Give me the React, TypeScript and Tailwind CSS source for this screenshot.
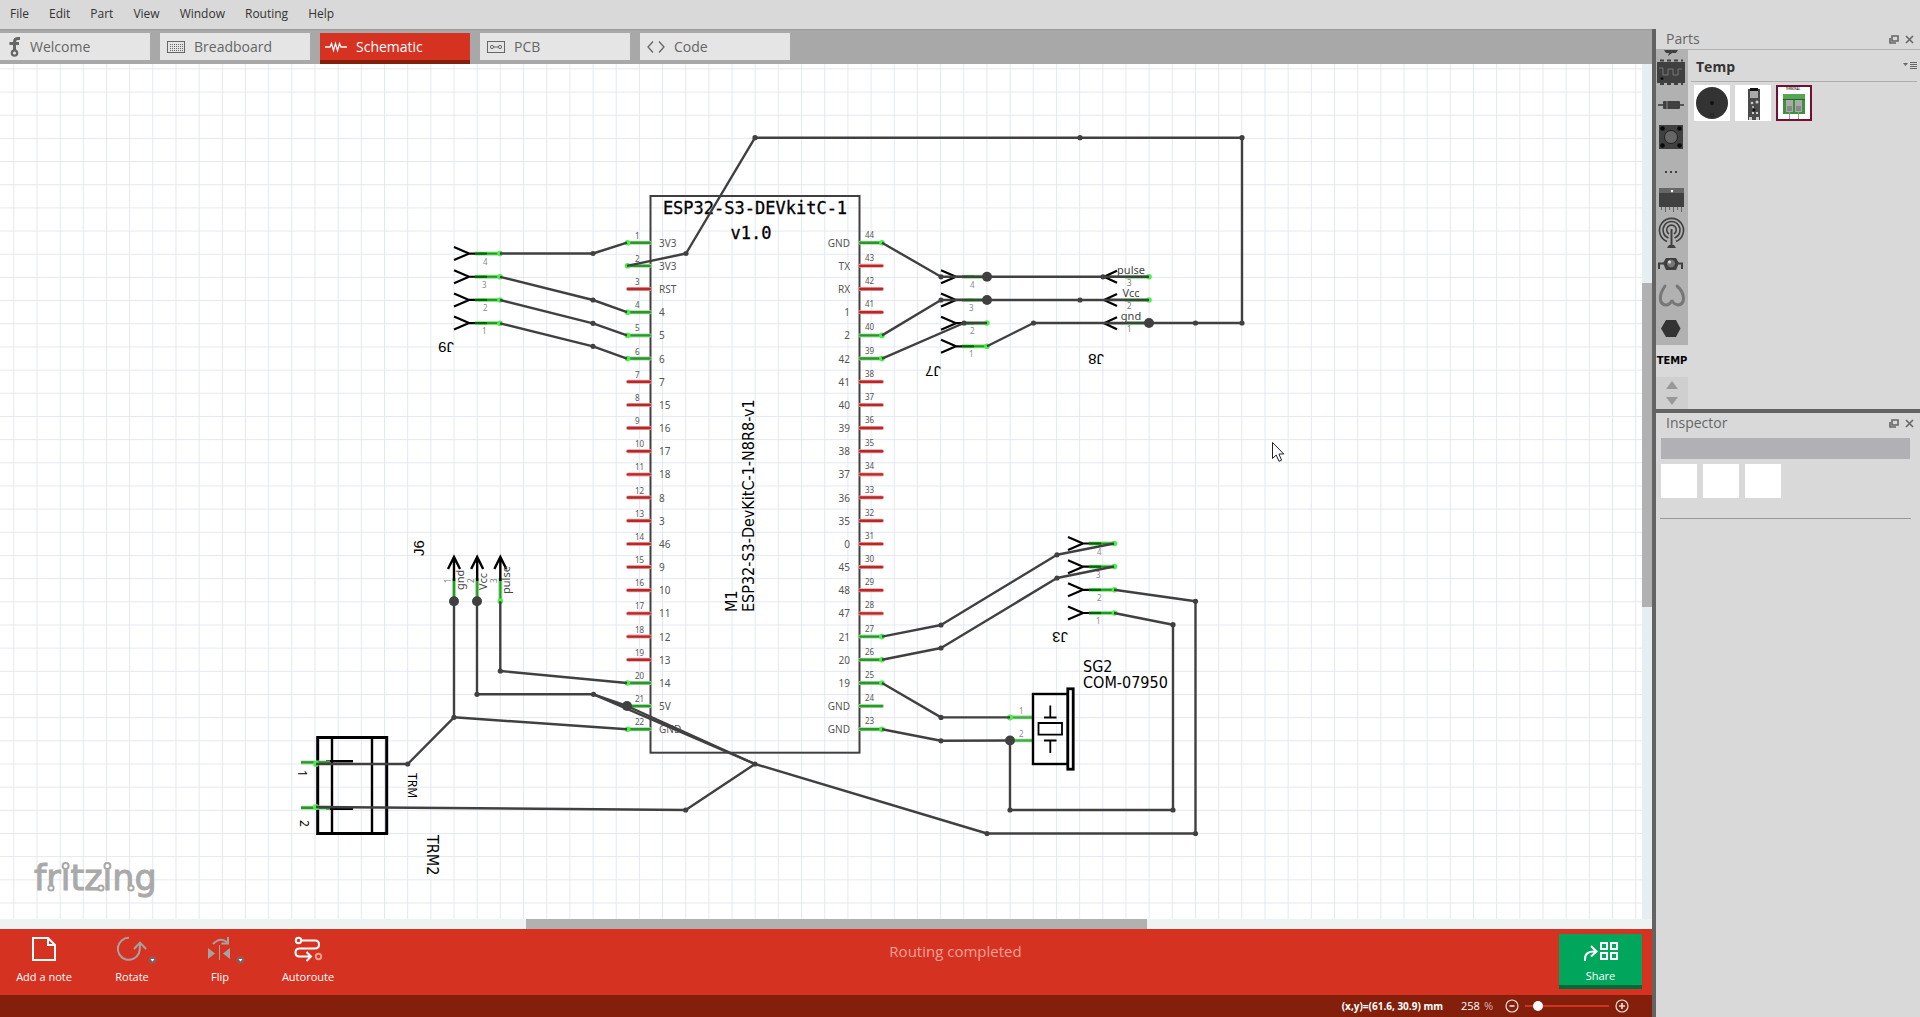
import React, { useState } from 'react';

const PITCH = 23.17;
const PIN_TOP = 242.7;

const menuItems = ['File', 'Edit', 'Part', 'View', 'Window', 'Routing', 'Help'];

const leftPins = ['3V3', '3V3', 'RST', '4', '5', '6', '7', '15', '16', '17', '18', '8', '3', '46', '9', '10', '11', '12', '13', '14', '5V', 'GND'];
const rightPins = ['GND', 'TX', 'RX', '1', '2', '42', '41', '40', '39', '38', '37', '36', '35', '0', '45', '48', '47', '21', '20', '19', 'GND', 'GND'];

const leftConnected = [1, 2, 4, 5, 6, 20, 21, 22];
const rightConnected = [44, 40, 39, 27, 26, 25, 24, 23];

const wires = [
  '500,253.5 593,253.5 627,242.7',
  '500,276.8 593,300 627,312.2',
  '500,300 593,323.3 627,335.4',
  '500,323.3 593,346.3 627,358.6',
  '627,265.8 686,253.5 755,137.7 1080,137.7 1242,137.7 1242,323 1104,323 1033.5,323 987,346.3',
  '882,242.7 941,276.8 1149,276.8',
  '882,335.4 941,300 1149,300',
  '882,358.6 964,323 987,323',
  '454,601.3 454,717.3 627,729.3',
  '454,717.3 407.7,764 316,764',
  '477,601.3 477,694.3 593.5,694.3 627,706 755,764',
  '593.5,694.3 755,764',
  '500.3,601.3 500.3,671 627,683',
  '316,807 685.7,810 755,764 987,833.5 1195.5,833.5 1195.5,601.3 1114,589.7',
  '882,636.6 941,625 1057,554.8 1114,543.5',
  '882,659.8 941,648 1057,578 1114,566.5',
  '882,683 941,717.4 1010,717.4',
  '882,729.3 941,740.8 1010,740.5',
  '1114,613 1173,624.7 1173,810 1010,810 1010,740.5',
];

const joints = [
  [593, 253.5], [593, 300], [593, 323.3], [593, 346.3], [686, 253.5], [755, 137.7], [1080, 137.7], [1242, 137.7],
  [1242, 323], [1195.5, 323], [1033.5, 323], [941, 276.8], [1103, 276.8], [941, 300], [1080, 300], [964, 323],
  [454, 717.3], [407.7, 764], [477, 694.3], [593.5, 694.3], [500.3, 671], [685.7, 810], [755, 764], [987, 833.5],
  [1195.5, 833.5], [1195.5, 601.3], [941, 625], [1057, 554.8], [941, 648], [1057, 578], [941, 717.4], [941, 740.8],
  [1173, 624.7], [1173, 810], [1010, 810],
];

const junctions = [[987, 276.8], [987, 300], [1149, 323], [454, 601.3], [477, 601.3], [627, 706], [1010, 740.5]];

const PinLine: React.FC<{ x1: number; x2: number; y: number; connected: boolean }> = ({ x1, x2, y, connected }) => (
  <g strokeLinecap="round">
    <line x1={x1} x2={x2} y1={y} y2={y} stroke={connected ? '#9adf9a' : '#f79a9a'} strokeWidth="4" />
    <line x1={x1} x2={x2} y1={y} y2={y} stroke={connected ? '#2f932f' : '#b02c2c'} strokeWidth="2.4" />
  </g>
);

// Female header: four forks pointing right
const ForkHeader: React.FC<{ x: number; y: number }> = ({ x, y }) => (
  <g>
    {[4, 3, 2, 1].map((n, i) => {
      const py = y + i * PITCH;
      return (
        <g key={n}>
          <line x1={x + 21} x2={x + 46} y1={py} y2={py} stroke="#8fe08f" strokeWidth="4" />
          <line x1={x + 21} x2={x + 46} y1={py} y2={py} stroke="#1c9c1c" strokeWidth="2" />
          <line x1={x + 21} x2={x + 33} y1={py} y2={py} stroke="#006400" strokeWidth="2.2" />
          <path d={`M${x} ${py - 6.5}L${x + 15} ${py}L${x} ${py + 6.5}M${x + 15} ${py}H${x + 21}`} fill="none" stroke="#000" strokeWidth="2.2" />
          <text x={x + (n % 2 ? 28 : 29)} y={py + 11} fontSize="8" fill="#8c8c8c">{n}</text>
        </g>
      );
    })}
  </g>
);

const Schematic: React.FC = () => (
  <svg className="block w-full h-full" fontFamily="'Noto Sans', sans-serif" role="img" aria-label="Schematic">
    <defs>
      <pattern id="grid" x="13.3" y="4.4" width={PITCH} height={PITCH} patternUnits="userSpaceOnUse">
        <path d={`M0 .5H${PITCH}M.5 0V${PITCH}`} stroke="#e3e8ef" strokeWidth="1" fill="none" />
      </pattern>
    </defs>
    <rect width="100%" height="100%" fill="#fff" />
    <rect width="100%" height="100%" fill="url(#grid)" />
    <g transform="translate(0 -64)">
      {/* Dev board */}
      <rect x="650.5" y="196" width="209" height="556.7" fill="none" stroke="#404040" strokeWidth="2" />
      <g fontFamily="'DejaVu Sans Mono', monospace" fontSize="17" stroke="#000" strokeWidth=".3" textAnchor="middle">
        <text x="755" y="214">ESP32-S3-DEVkitC-1</text>
        <text x="751" y="239">v1.0</text>
      </g>
      {leftPins.map((label, i) => {
        const y = PIN_TOP + i * PITCH;
        return (
          <g key={i}>
            <PinLine x1={628} x2={650} y={y} connected={leftConnected.includes(i + 1)} />
            <text x="635" y={y - 4} fontSize="8" fill="#555">{i + 1}</text>
            <text x="659" y={y + 4} fontSize="10" fill="#555">{label}</text>
          </g>
        );
      })}
      {rightPins.map((label, i) => {
        const y = PIN_TOP + i * PITCH;
        return (
          <g key={i}>
            <PinLine x1={860} x2={882} y={y} connected={rightConnected.includes(44 - i)} />
            <text x="865" y={y - 5} fontSize="8" fill="#555">{44 - i}</text>
            <text x="850" y={y + 4} fontSize="10" fill="#555" textAnchor="end">{label}</text>
          </g>
        );
      })}

      <ForkHeader x={454} y={253.6} />
      <ForkHeader x={941} y={276.8} />
      <ForkHeader x={1068} y={543.5} />

      {/* J8 */}
      {['pulse', 'Vcc', 'gnd'].map((label, i) => {
        const y = 276.8 + i * PITCH;
        return (
          <g key={label}>
            <line x1="1125" x2="1149" y1={y} y2={y} stroke="#8fe08f" strokeWidth="4" />
            <path d={`M1117 ${y - 6}L1104 ${y}L1117 ${y + 6}M1104 ${y}H1125`} fill="none" stroke="#000" strokeWidth="2.2" />
            <text x="1131" y={y - 3} fontSize="11" fill="#444" textAnchor="middle">{label}</text>
            <text x="1127" y={y + 9} fontSize="8" fill="#777">{3 - i}</text>
          </g>
        );
      })}

      {/* J6 */}
      {['gnd', 'Vcc', 'pulse'].map((label, i) => {
        const x = 454 + i * PITCH;
        return (
          <g key={label}>
            <line x1={x} x2={x} y1="578" y2="601" stroke="#8fe08f" strokeWidth="4" />
            <line x1={x} x2={x} y1="578" y2="601" stroke="#2f932f" strokeWidth="2" />
            <path d={`M${x - 6} 569L${x} 557L${x + 6} 569M${x} 557V581`} fill="none" stroke="#000" strokeWidth="2.4" />
            <text transform={`translate(${x + 10} ${i === 2 ? 594 : 590}) rotate(-90)`} fontSize="11" fill="#444">{label}</text>
            <text transform={`translate(${x - 3} 583) rotate(-90)`} fontSize="8" fill="#777">{i + 1}</text>
          </g>
        );
      })}

      {/* Screw terminal */}
      <g fill="none" stroke="#000">
        <rect x="317.7" y="737.5" width="69" height="96" strokeWidth="3" />
        <path d="M332 738V833M372 738V833" strokeWidth="2.4" />
        <path d="M326 761.3H353M326 808.6H353" strokeWidth="2.6" />
      </g>
      <path d="M301 762.4H330M301 807.7H330" stroke="#8fe08f" strokeWidth="4" />
      <path d="M301 762.4H330M301 807.7H330" stroke="#2f932f" strokeWidth="2.4" />
      <text transform="translate(298 770) rotate(90)" fontSize="12">1</text>
      <text transform="translate(300 820) rotate(90)" fontSize="12">2</text>
      <text transform="translate(408 773) rotate(90)" fontSize="12">TRM</text>

      {/* Piezo buzzer */}
      <path d="M1010 717.4H1033M1010 740.5H1033" stroke="#7fd67f" strokeWidth="3.6" />
      <path d="M1010 717.4H1033M1010 740.5H1033" stroke="#46a846" strokeWidth="2" />
      <rect x="1033" y="694" width="35" height="70" fill="none" stroke="#000" strokeWidth="2.4" />
      <rect x="1067.8" y="688.8" width="5.4" height="80.4" fill="#fff" stroke="#000" strokeWidth="2.8" />
      <path d="M1050.3 705.5V717.5M1044 717.5H1056.5M1044 740.5H1056.5M1050.3 740.5V753M1038.5 723H1062V734.7H1038.5Z" fill="none" stroke="#000" strokeWidth="1.8" />
      <text x="1019" y="714" fontSize="8" fill="#8c8c8c">1</text>
      <text x="1019" y="737" fontSize="8" fill="#8c8c8c">2</text>

      {/* Open pin ends */}
      <g fill="#4fee4f">
        {[242.7, 265.8, 312.2, 335.4, 358.6, 683, 729.3].map((y) => <circle key={y} cx="627.5" cy={y} r="2.8" />)}
        {[242.7, 335.4, 358.6, 636.6, 659.8, 683, 729.3].map((y) => <circle key={y} cx="882" cy={y} r="2.8" />)}
        {[253.6, 276.8, 300, 323.2].map((y) => <circle key={y} cx="500" cy={y} r="2.8" />)}
        {[543.5, 566.6, 589.8, 613].map((y) => <circle key={y} cx="1114.5" cy={y} r="2.8" />)}
        {[323, 346.3].map((y) => <circle key={y} cx="987" cy={y} r="2.8" />)}
        {[276.8, 300].map((y) => <circle key={y} cx="1149" cy={y} r="2.8" />)}
        <circle cx="500.3" cy="601.3" r="2.8" />
        <circle cx="1010" cy="717.4" r="3" />
        <circle cx="316" cy="764" r="3" />
        <circle cx="316" cy="807" r="3" />
      </g>

      {/* Wires */}
      <g fill="none" stroke="#404040" strokeWidth="2.4" strokeLinejoin="round">
        {wires.map((points) => <polyline key={points} points={points} />)}
      </g>
      <g fill="#404040">
        {joints.map(([x, y]) => <circle key={`${x}-${y}`} cx={x} cy={y} r="2.6" />)}
        {junctions.map(([x, y]) => <circle key={`${x}-${y}`} cx={x} cy={y} r="5" />)}
      </g>

      {/* Part labels */}
      <g fontFamily="'DejaVu Sans Condensed', 'Noto Sans', sans-serif" fontSize="16">
        <text transform="translate(737 612) rotate(-90)">M1</text>
        <text transform="translate(754 612) rotate(-90)">ESP32-S3-DevKitC-1-N8R8-v1</text>
        <text transform="translate(427 835) rotate(90)">TRM2</text>
        <text x="1083" y="672">SG2</text>
        <text x="1083" y="688">COM-07950</text>
      </g>
      <g fontFamily="'Liberation Sans', sans-serif" fontSize="15">
        <text transform="translate(454 342) rotate(180)">J9</text>
        <text transform="translate(941 366) rotate(180)">J7</text>
        <text transform="translate(1104 354) rotate(180)">J8</text>
        <text transform="translate(1068 632) rotate(180)">J3</text>
        <text transform="translate(424 556) rotate(-90)">J6</text>
      </g>

      {/* Watermark */}
      <text x="34" y="890" fontFamily="'DejaVu Sans', sans-serif" fontSize="35" fill="#a9a9a9" stroke="#a9a9a9" strokeWidth="1">fritzing</text>
      <g fill="#fff" stroke="#a9a9a9" strokeWidth="2">
        <circle cx="65.600" cy="866" r="3" />
        <circle cx="107.400" cy="866" r="3" />
        <circle cx="51" cy="888" r="2.600" />
        <circle cx="101" cy="888" r="2.600" />
        <circle cx="131" cy="888" r="2.600" />
      </g>

      <path d="M1272.5 442.5V458.5L1276.2 455L1279 461.3L1281.6 460.2L1278.9 454H1283.8Z" fill="#fff" stroke="#222" strokeWidth="1" />
    </g>
  </svg>
);

const WelcomeIcon = () => (
  <svg width="14" height="22" viewBox="0 0 14 22" fill="none" stroke="#666" strokeWidth="3">
    <path d="M13 2.5H11Q7.500 2.500 7.500 6V14M2.500 7.500H12" />
    <circle cx="7.500" cy="17" r="2.700" strokeWidth="2.200" />
  </svg>
);

const BreadboardIcon = () => (
  <svg width="18" height="14" viewBox="0 0 18 14" fill="none" stroke="#666">
    <rect x=".5" y="1.5" width="17" height="11" />
    <path d="M3 4.5H16M3 6.5H16M3 8.5H16M3 10.5H16" strokeDasharray="1 1" />
  </svg>
);

const SchematicIcon = () => (
  <svg width="22" height="14" viewBox="0 0 22 14" fill="none" stroke="#fff" strokeWidth="1.3">
    <path d="M0 7H5L6.5 3.5L8.5 10.5L10.5 3.5L12.5 10.5L14.5 3.5L16 7H22" />
  </svg>
);

const PcbIcon = () => (
  <svg width="18" height="14" viewBox="0 0 18 14" fill="none" stroke="#666">
    <rect x=".5" y="1.5" width="17" height="11" />
    <circle cx="5" cy="7" r="1.6" />
    <circle cx="13" cy="7" r="1.6" />
    <path d="M6.6 7H11.4" />
  </svg>
);

const CodeIcon = () => (
  <svg width="18" height="14" viewBox="0 0 18 14" fill="none" stroke="#666" strokeWidth="1.3">
    <path d="M6 1.5L1 7L6 12.5M12 1.5L17 7L12 12.5" />
  </svg>
);

const tabs = [
  { name: 'Welcome', icon: <WelcomeIcon /> },
  { name: 'Breadboard', icon: <BreadboardIcon /> },
  { name: 'Schematic', icon: <SchematicIcon /> },
  { name: 'PCB', icon: <PcbIcon /> },
  { name: 'Code', icon: <CodeIcon /> },
];

const NoteIcon = () => (
  <svg width="26" height="26" viewBox="0 0 26 26" fill="none" stroke="#fff" strokeWidth="2">
    <path d="M2 2H17L24 9V24H2ZM17 2V9H24" />
  </svg>
);

const DropBadge = () => (
  <g stroke="none">
    <circle cx="36.500" cy="24" r="4" fill="#8c5a5a" />
    <path d="M34.500 23H38.500L36.500 25.400Z" fill="#fff" />
  </g>
);

const RotateIcon = () => (
  <svg width="50" height="28" viewBox="-9 0 50 28" fill="none" stroke="#a3a3a3" strokeWidth="2">
    <path d="M13 1.8A11 11 0 1 0 23 17Q24 14 24 7M18 13L24 6.6L30 13" />
    <DropBadge />
  </svg>
);

const FlipIcon = () => (
  <svg width="50" height="28" viewBox="-9 0 50 28" fill="none">
    <path d="M9 8Q16 .5 23 6M24 1V7.5H17.5" stroke="#a3a3a3" strokeWidth="2" />
    <path d="M15.5 9V24" stroke="#a3a3a3" />
    <path d="M4 12L11 17.5L4 23ZM26 12L19 17.5L26 23Z" fill="#a3a3a3" />
    <DropBadge />
  </svg>
);

const AutorouteIcon = () => (
  <svg width="30" height="28" viewBox="0 0 30 28" fill="none" stroke="#fff" strokeWidth="2">
    <circle cx="5.5" cy="4.5" r="2.7" />
    <path d="M8.500 4.500H22Q26 4.500 26 8.500T22 12.500H6.500Q2.500 12.500 2.500 16.500T6.500 20.500H18M13.500 16L18 20.500L13.500 25" />
    <circle cx="25.500" cy="20.500" r="2.700" stroke="#f5a08c" />
  </svg>
);

const ShareIcon = () => (
  <svg width="36" height="20" viewBox="0 0 36 20" fill="none" stroke="#fff" strokeWidth="2">
    <path d="M2 19V17Q2 9 12 9.500M8 4L13.500 9.500L8 14.500" />
    <path d="M18 1H24V7H18ZM28 1H34V7H28ZM18 11H24V17H18ZM28 11H34V17H28Z" />
  </svg>
);

const tools = [
  { name: 'Add a note', icon: <NoteIcon /> },
  { name: 'Rotate', icon: <RotateIcon /> },
  { name: 'Flip', icon: <FlipIcon /> },
  { name: 'Autoroute', icon: <AutorouteIcon /> },
];

const bins = [
  {
    name: 'Integrated circuits',
    icon: (
      <>
        <path d="M4 3.500H8M11 3.500H15M18 3.500H22M25 3.500H27M4 27H8M11 27H15M18 27H22M25 27H27" stroke="#404040" strokeWidth="2" />
        <rect x="1" y="5" width="28" height="21" fill="#404040" />
        <path d="M3 11H7V18H12V12H17V18H22V12H26" fill="none" stroke="#777" />
        <circle cx="6" cy="21.500" r="1.500" fill="#111" />
      </>
    ),
  },
  {
    name: 'Diodes',
    icon: (
      <>
        <path d="M2 16H28" stroke="#555" strokeWidth="2" />
        <rect x="7" y="12" width="17" height="8" rx="1" fill="#404040" />
        <path d="M11 12V20" stroke="#888" />
      </>
    ),
  },
  {
    name: 'Buttons',
    icon: (
      <>
        <rect x="3" y="4" width="24" height="24" fill="#404040" />
        <circle cx="15" cy="16" r="6.500" fill="#666" stroke="#222" />
        <g fill="#0a0a0a">
          <circle cx="6.500" cy="7.500" r="2.300" />
          <circle cx="23.500" cy="7.500" r="2.300" />
          <circle cx="6.500" cy="24.500" r="2.300" />
          <circle cx="23.500" cy="24.500" r="2.300" />
        </g>
      </>
    ),
  },
  { name: 'Miscellaneous', icon: <path d="M9 19H11M14 19H16M19 19H21" stroke="#404040" strokeWidth="2" /> },
  {
    name: 'Drivers',
    icon: (
      <>
        <rect x="3" y="3" width="25" height="19" fill="#404040" />
        <rect x="3" y="3" width="25" height="5" fill="#666" />
        <circle cx="16" cy="6" r="1.200" fill="#fff" />
        <path d="M5.500 22V25M9.500 22V27M13.500 22V25M17.500 22V27M21.500 22V25M25.500 22V27" stroke="#666" />
      </>
    ),
  },
  {
    name: 'Wireless',
    icon: (
      <>
        <g fill="none" stroke="#404040" strokeWidth="1.600">
          <path d="M11 24.500A12 12 0 1 1 20 24.500M12.500 21A8.500 8.500 0 1 1 18.500 21M13 17A4.800 4.800 0 1 1 18 17" />
        </g>
        <path d="M15.500 12V29" stroke="#404040" strokeWidth="2" />
        <path d="M11 31L13 28H18L20 31Z" fill="#404040" />
      </>
    ),
  },
  {
    name: 'Sensors',
    icon: (
      <>
        <path d="M3 20V14.500H8M26 20V14.500H22" fill="none" stroke="#404040" strokeWidth="2" />
        <path d="M10 9H20L23 14L20 21H10L7 14Z" fill="#404040" />
        <circle cx="15" cy="14.500" r="4.500" fill="#777" stroke="#333" />
        <circle cx="13.500" cy="13" r="1.500" fill="#ddd" />
      </>
    ),
  },
  {
    name: 'Wires',
    icon: <path d="M9 5C2 15 3 24 11 24Q15 23 16 19Q17 23 22 24C30 23 29 12 21 5" fill="none" stroke="#777" strokeWidth="3" strokeLinecap="round" />,
  },
  { name: 'Mechanical', icon: <path d="M5 15.500L10 7H20L24.500 15.500L20 24H10Z" fill="#333" /> },
];

const PanelHeader: React.FC<{ title: string }> = ({ title }) => (
  <div className="flex h-5 shrink-0 items-center pl-2.5 pr-1.5">
    <h2 className="flex-1 text-[14px] leading-5 text-[#666]">{title}</h2>
    <button aria-label={`Float ${title}`} className="mr-1.5">
      <svg width="10" height="9" viewBox="0 0 10 9" fill="none" stroke="#666" strokeWidth="1.600">
        <path d="M3 1H9V6H3ZM1 3V8H7" />
      </svg>
    </button>
    <button aria-label={`Close ${title}`}>
      <svg width="9" height="9" viewBox="0 0 9 9" stroke="#666" strokeWidth="1.600">
        <path d="M1 1L8 8M8 1L1 8" />
      </svg>
    </button>
  </div>
);

const PartsPanel: React.FC = () => (
  <section className="flex h-[380px] shrink-0 flex-col">
    <PanelHeader title="Parts" />
    <div className="flex min-h-0 flex-1 border-t border-[#b0b0b0]">
      <div className="flex w-8 flex-col">
        <div className="flex min-h-0 flex-1 flex-col justify-end overflow-hidden bg-[#b1b1b1]">
          <svg className="w-8 shrink-0" height="7" viewBox="0 0 32 7" aria-hidden="true">
            <path d="M8 0H22L20 3H16L12 6L13 3H10Z" fill="#404040" />
          </svg>
          {bins.map((bin) => (
            <button key={bin.name} aria-label={bin.name} className="h-8 w-8 shrink-0">
              <svg width="32" height="32" viewBox="0 0 32 32">{bin.icon}</svg>
            </button>
          ))}
        </div>
        <button className="h-8 shrink-0 font-['DejaVu_Sans_Condensed','Noto_Sans',sans-serif] text-[11px] font-bold text-black">TEMP</button>
        <div className="flex h-8 shrink-0 flex-col bg-[#cfcfcf]">
          <button aria-label="Scroll up" className="flex h-4 items-center justify-center">
            <svg width="12" height="8" viewBox="0 0 12 8"><path d="M0 8H12L6 0Z" fill="#999" /></svg>
          </button>
          <button aria-label="Scroll down" className="flex h-4 items-center justify-center">
            <svg width="12" height="8" viewBox="0 0 12 8"><path d="M0 0H12L6 8Z" fill="#999" /></svg>
          </button>
        </div>
      </div>
      <div className="flex-1 px-[3px]">
        <div className="flex h-8 items-center border-b border-[#adadad] pl-[5px]">
          <h3 className="flex-1 pt-0.5 text-[14px] font-bold leading-5 text-[#333]">Temp</h3>
          <button aria-label="Bin menu">
            <svg width="14" height="10" viewBox="0 0 14 10">
              <path d="M0 2H5L2.500 5Z" fill="#666" />
              <path d="M7 1.500H14M7 3.500H14M7 5.500H14M7 7.500H14" stroke="#666" />
            </svg>
          </button>
        </div>
        <div className="flex gap-[5px] px-[3px] pt-[3px]">
          <button aria-label="Buzzer" className="h-9 w-9 bg-white">
            <svg width="36" height="36" viewBox="0 0 36 36">
              <circle cx="18" cy="18" r="16" fill="#333" />
              <circle cx="18" cy="18" r="2" fill="#111" />
              <circle cx="18" cy="30" r="1.800" fill="none" stroke="#222" />
            </svg>
          </button>
          <button aria-label="Dev board" className="h-9 w-9 bg-white">
            <svg width="36" height="36" viewBox="0 0 36 36">
              <rect x="13" y="4" width="12" height="31" fill="#4a4a4a" />
              <rect x="15" y="3" width="8" height="3" fill="#111" />
              <rect x="15" y="6" width="8" height="7" fill="#aaa" />
              <g fill="#ccc">
                <circle cx="17" cy="18" r="1.300" />
                <circle cx="22" cy="17" r="1.500" />
                <circle cx="18" cy="22" r="1" />
                <rect x="17" y="27" width="2" height="2" />
                <rect x="21" y="27" width="2" height="2" />
                <rect x="14" y="32" width="3" height="3" />
                <rect x="21" y="32" width="3" height="3" />
              </g>
              <circle cx="19" cy="25" r="1.500" fill="#111" />
            </svg>
          </button>
          <button aria-label="Screw terminal" className="h-9 w-9 border-2 border-[#730f32] bg-white">
            <svg width="32" height="32" viewBox="0 0 32 32">
              <text x="15" y="3" fontSize="3" textAnchor="middle" fontFamily="'Noto Sans', sans-serif">TERMINAL</text>
              <rect x="5" y="7" width="22" height="20" fill="#3f8f3f" />
              <rect x="5" y="7" width="22" height="5" fill="#55a555" />
              <path d="M5 12.500H27" stroke="#226622" />
              <rect x="8" y="13" width="7" height="12" fill="#aaa" />
              <rect x="17" y="13" width="7" height="12" fill="#aaa" />
              <rect x="9" y="19" width="5" height="5" fill="#888" />
              <rect x="18" y="19" width="5" height="5" fill="#888" />
              <path d="M11.500 25V32M20.500 25V32" stroke="#999" />
            </svg>
          </button>
        </div>
      </div>
    </div>
  </section>
);

const InspectorPanel: React.FC = () => (
  <section className="flex-1">
    <PanelHeader title="Inspector" />
    <div className="ml-[5px] mr-[10px] mt-[5px] h-[21px] bg-[#b0b0b5]" />
    <div className="mt-[5px] flex gap-1.5 pl-[5px]">
      <div className="h-[34px] w-9 bg-white" />
      <div className="h-[34px] w-9 bg-white" />
      <div className="h-[34px] w-9 bg-white" />
    </div>
    <div className="ml-1 mr-[9px] mt-5 border-t border-[#999]" />
  </section>
);

export default function App() {
  const [activeTab, setActiveTab] = useState('Schematic');
  const [zoom, setZoom] = useState(258);

  return (
    <div className="flex h-screen flex-col overflow-hidden bg-[#d9d9d9] font-['Open_Sans','Noto_Sans',sans-serif] text-[#333]">
      <nav className="flex h-[29px] shrink-0 items-start gap-5 px-2.5 pt-1">
        {menuItems.map((item) => (
          <button key={item} className="text-[12px] leading-5">{item}</button>
        ))}
      </nav>

      <div className="flex min-h-0 flex-1">
        <main className="flex min-w-0 flex-1 flex-col">
          {/* View tabs */}
          <div className="flex h-[35px] shrink-0 gap-2.5 border-t border-[#999] bg-[#a8a8a8] pt-[3px]">
            {tabs.map((tab) => (
              <button
                key={tab.name}
                onClick={() => setActiveTab(tab.name)}
                className={
                  tab.name === activeTab
                    ? 'flex h-[31px] w-[150px] items-center border-b-4 border-[#831f0b] bg-[#d63222] pl-[5px] text-[14px] text-white'
                    : 'flex h-[27px] w-[150px] items-center bg-[#e5e5e5] pl-[7px] text-[14px] text-[#666]'
                }
              >
                <span className="mr-[9px] flex">{tab.icon}</span>
                {tab.name}
              </button>
            ))}
          </div>

          {/* Canvas */}
          <div className="flex min-h-0 flex-1">
            <div className="min-w-0 flex-1 overflow-hidden">
              <Schematic />
            </div>
            <div className="w-2.5 bg-[#e6eef1] pt-[219px]">
              <div className="h-[324px] bg-[#b1b1b1]" />
            </div>
          </div>
          <div className="flex h-2.5 shrink-0 bg-[#edf2f3] pl-[526px]">
            <div className="w-[621px] bg-[#b1b1b1]" />
          </div>

          {/* Toolbar */}
          <div className="flex h-[66px] shrink-0 items-start bg-[#d63222] pr-2.5">
            {tools.map((tool) => (
              <button key={tool.name} className="flex h-full w-[88px] flex-col items-center pt-[7px] text-[11px] leading-4 text-white">
                <span className="flex h-[33px] items-start">{tool.icon}</span>
                {tool.name}
              </button>
            ))}
            <p className="flex-1 pt-3 text-center text-[15px] leading-5 text-[#f2a195]">Routing completed</p>
            <button className="mt-[5px] flex h-[55px] w-[83px] flex-col items-center border-b-4 border-[#006a38] bg-[#00a65c] pt-2 text-[11px] leading-4 text-white">
              <span className="flex h-[26px] items-start"><ShareIcon /></span>
              Share
            </button>
          </div>

          {/* Status bar */}
          <div className="flex h-[22px] shrink-0 items-center justify-end bg-[#831f0b] pr-[23px] text-[11px] text-white">
            <span className="mr-[18px] font-['Open_Sans',sans-serif] text-[10px] font-bold">(x,y)=(61.6, 30.9) mm</span>
            <span className="mr-1">{zoom}</span>
            <span className="mr-3 text-[#d9b3ab]">%</span>
            <button aria-label="Zoom out" onClick={() => setZoom(zoom - 10)}>
              <svg width="14" height="14" viewBox="0 0 14 14" fill="none" stroke="#f0e0dc" strokeWidth="1.200">
                <circle cx="7" cy="7" r="6" />
                <path d="M4.500 7H9.500" strokeWidth="1.600" />
              </svg>
            </button>
            <input
              type="range"
              aria-label="Zoom"
              min="10"
              max="2400"
              value={zoom}
              onChange={(e) => setZoom(Number(e.target.value))}
              className="mx-1.5 h-2.5 w-[84px] appearance-none bg-transparent [&::-webkit-slider-runnable-track]:h-0.5 [&::-webkit-slider-runnable-track]:bg-[#d63222] [&::-webkit-slider-thumb]:-mt-1 [&::-webkit-slider-thumb]:h-2.5 [&::-webkit-slider-thumb]:w-2.5 [&::-webkit-slider-thumb]:appearance-none [&::-webkit-slider-thumb]:rounded-full [&::-webkit-slider-thumb]:bg-white"
            />
            <button aria-label="Zoom in" onClick={() => setZoom(zoom + 10)}>
              <svg width="14" height="14" viewBox="0 0 14 14" fill="none" stroke="#f0e0dc" strokeWidth="1.200">
                <circle cx="7" cy="7" r="6" />
                <path d="M4 7H10M7 4V10" strokeWidth="1.600" />
              </svg>
            </button>
          </div>
        </main>

        <div className="w-1 shrink-0 bg-[#636363]" />

        <aside className="flex w-[264px] shrink-0 flex-col">
          <PartsPanel />
          <div className="h-1 shrink-0 bg-[#636363]" />
          <InspectorPanel />
        </aside>
      </div>
    </div>
  );
}
